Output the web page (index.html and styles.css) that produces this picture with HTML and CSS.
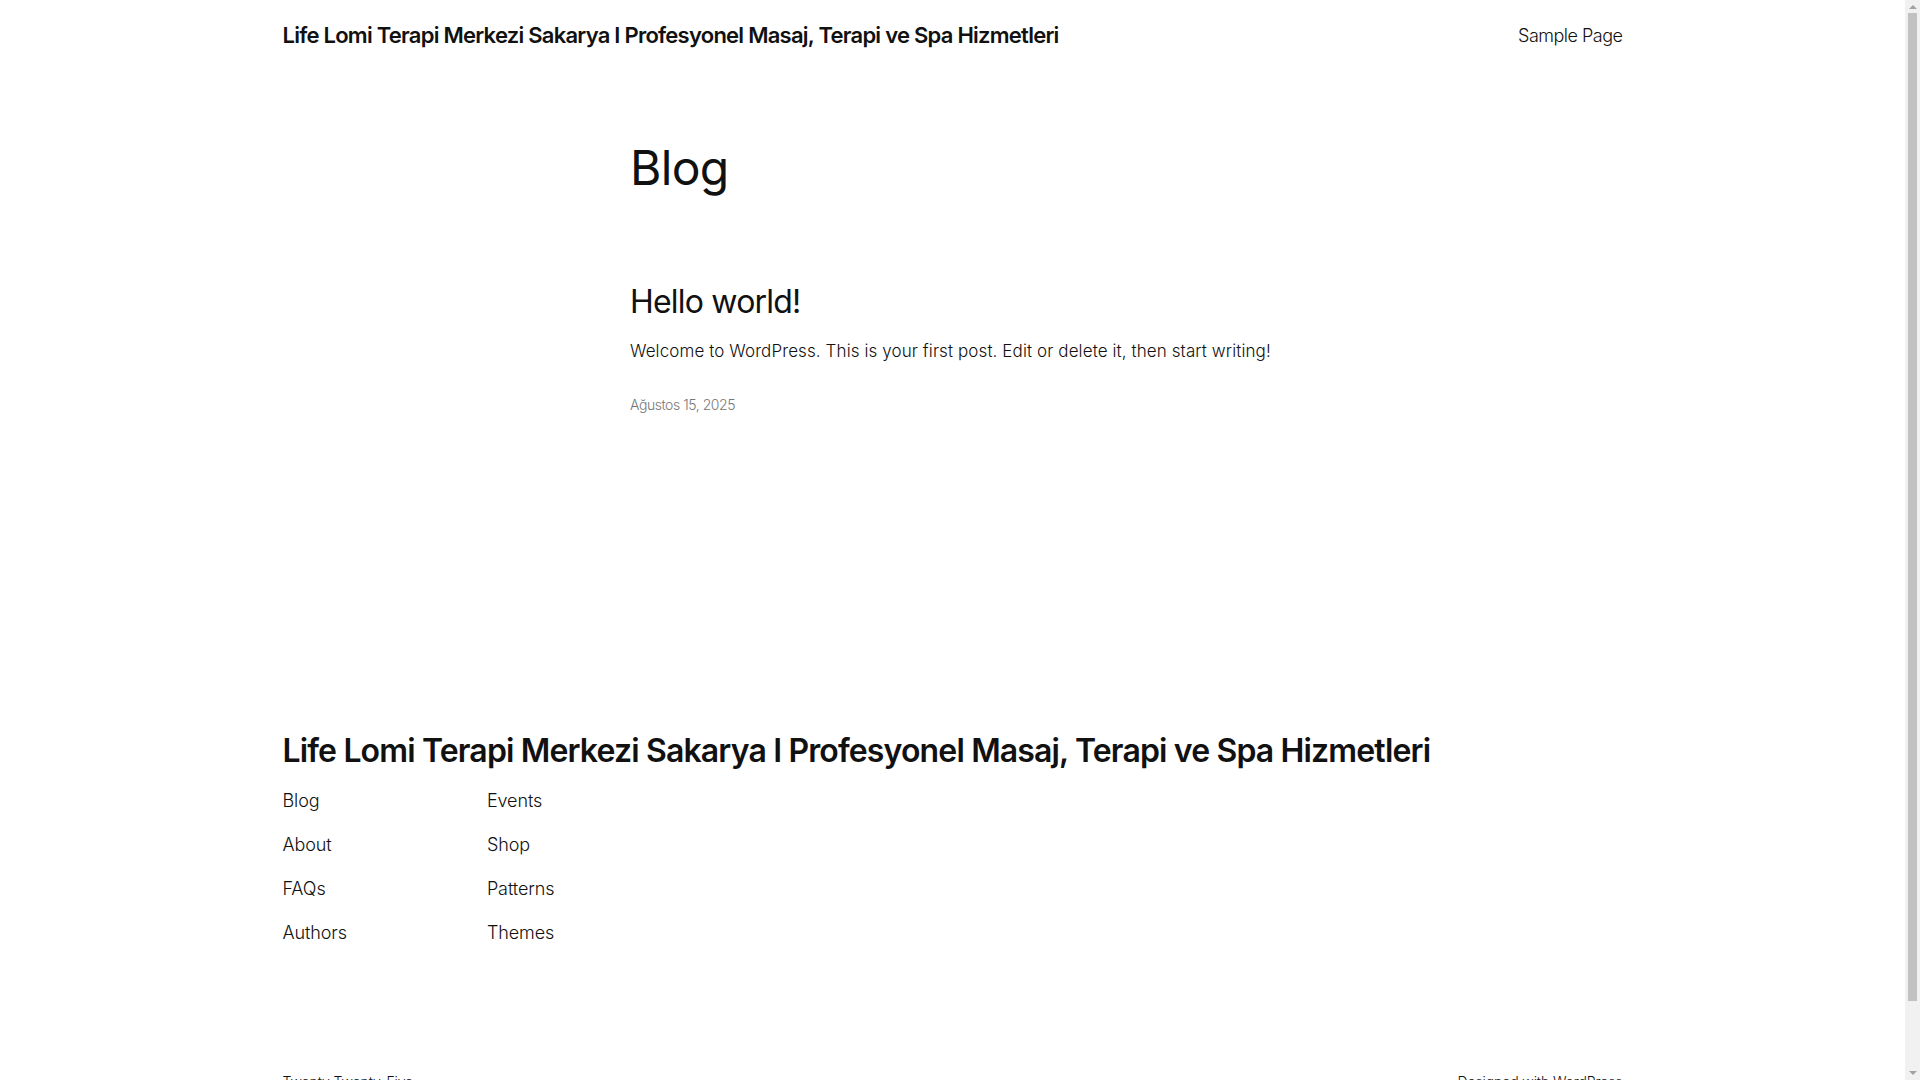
FILE: index.html
```html
<!DOCTYPE html>
<html lang="tr">
  <head>
    <meta charset="UTF-8" />
    <meta name="viewport" content="width=device-width, initial-scale=1.0" />
    <title>Blog – Life Lomi Terapi Merkezi Sakarya</title>
    <link rel="stylesheet" href="styles.css">
  </head>
  <body>
    <header class="site-header">
      <div class="wide header-row">
        <p class="site-title"><a href="#">Life Lomi Terapi Merkezi Sakarya I Profesyonel Masaj, Terapi ve Spa Hizmetleri</a></p>
        <nav class="top-nav">
          <a href="#">Sample Page</a>
        </nav>
      </div>
    </header>

    <main class="site-main">
      <div class="content">
        <h1 class="page-title">Blog</h1>

        <ul class="post-list">
          <li class="post">
            <h2 class="post-title"><a href="#">Hello world!</a></h2>
            <p class="post-excerpt">Welcome to WordPress. This is your first post. Edit or delete it, then start writing!</p>
            <time class="post-date" datetime="2025-08-15">Ağustos 15, 2025</time>
          </li>
        </ul>
      </div>
    </main>

    <footer class="site-footer">
      <div class="wide">
        <p class="footer-title"><a href="#">Life Lomi Terapi Merkezi Sakarya I Profesyonel Masaj, Terapi ve Spa Hizmetleri</a></p>

        <div class="footer-navs">
          <nav class="footer-nav">
            <a href="#">Blog</a>
            <a href="#">About</a>
            <a href="#">FAQs</a>
            <a href="#">Authors</a>
          </nav>
          <nav class="footer-nav">
            <a href="#">Events</a>
            <a href="#">Shop</a>
            <a href="#">Patterns</a>
            <a href="#">Themes</a>
          </nav>
        </div>

        <div class="footer-bottom">
          <p>Twenty Twenty-Five</p>
          <p>Designed with <a href="#">WordPress</a></p>
        </div>
      </div>
    </footer>

    <!-- the window's scrollbar, as it shows in the screenshot -->
    <div class="scrollbar">
      <span class="arrow up"></span>
      <span class="thumb"></span>
      <span class="arrow down"></span>
    </div>
  </body>
</html>
```

FILE: styles.css
```css
body {
  margin: 0;
  padding-right: 15px;
  background-color: #ffffff;
  color: #111111;
  font-family: Inter, "Noto Sans", sans-serif;
  font-size: 18px;
  font-weight: 300;
  line-height: 1.4;
  letter-spacing: -0.1px;
}

a {
  color: inherit;
  text-decoration: none;
}

p {
  margin: 0;
}

.wide {
  max-width: 1340px;
  margin: 0 auto;
}

/* header */

.site-header {
  padding: 20px 50px;
}

.header-row {
  display: flex;
  justify-content: space-between;
  align-items: center;
}

.site-title {
  font-size: 22px;
  font-weight: 600;
  letter-spacing: -0.75px;
}

.top-nav a {
  font-size: 18px;
  letter-spacing: -0.5px;
}

/* main */

.site-main {
  margin-top: 70px;
  padding: 0 50px 178px;
}

.content {
  max-width: 645px;
  margin: 0 auto;
}

.page-title {
  margin: 0;
  font-size: 48px;
  font-weight: 400;
  line-height: 1.125;
  letter-spacing: -0.7px;
}

.post-list {
  list-style: none;
  margin: 89px 0 0;
  padding: 0;
}

.post-title {
  margin: 0;
  font-size: 32px;
  font-weight: 400;
  line-height: 1.125;
  letter-spacing: -0.8px;
}

.post-excerpt {
  margin-top: 19px;
  font-size: 17px;
  line-height: 25.2px;
  letter-spacing: 0.1px;
  white-space: nowrap;
}

.post-date {
  display: block;
  margin-top: 31px;
  font-size: 14px;
  letter-spacing: -0.45px;
  color: #777777;
}

/* footer */

.site-footer {
  padding: 140px 50px 50px;
}

.footer-title {
  font-size: 32px;
  font-weight: 600;
  line-height: 1.125;
  letter-spacing: -0.85px;
}

.footer-navs {
  display: flex;
  gap: 140px;
  margin-top: 19px;
}

.footer-nav {
  display: flex;
  flex-direction: column;
  gap: 18.8px;
}

.footer-bottom {
  display: flex;
  justify-content: space-between;
  margin-top: 127px;
  font-size: 14px;
}

.footer-bottom a {
  text-decoration: underline;
}

/* scrollbar */

.scrollbar {
  position: fixed;
  top: 0;
  right: 0;
  width: 15px;
  height: 100vh;
  background-color: #f1f1f1;
  display: flex;
  flex-direction: column;
  align-items: center;
}

.arrow {
  width: 0;
  height: 0;
  border-left: 4px solid transparent;
  border-right: 4px solid transparent;
  margin: 5px 0 4px;
}

.arrow.up {
  border-bottom: 4px solid #a3a3a3;
}

.arrow.down {
  margin: 4px 0 5px;
  border-top: 4px solid #a3a3a3;
}

.thumb {
  flex: 1;
  width: 9px;
  margin-bottom: 66px;
  background-color: #c1c1c1;
}
```
